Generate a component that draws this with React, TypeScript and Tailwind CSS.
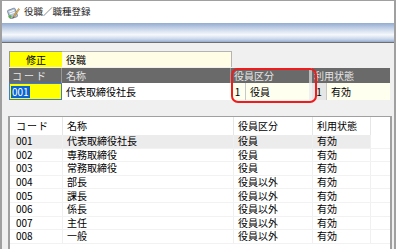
import React from "react";

const rows = [
  { code: "001", name: "代表取締役社長", kubun: "役員", status: "有効" },
  { code: "002", name: "専務取締役", kubun: "役員", status: "有効" },
  { code: "003", name: "常務取締役", kubun: "役員", status: "有効" },
  { code: "004", name: "部長", kubun: "役員以外", status: "有効" },
  { code: "005", name: "課長", kubun: "役員以外", status: "有効" },
  { code: "006", name: "係長", kubun: "役員以外", status: "有効" },
  { code: "007", name: "主任", kubun: "役員以外", status: "有効" },
  { code: "008", name: "一般", kubun: "役員以外", status: "有効" },
];

// タイトルバーの小さいアイコン
function TitleIcon() {
  return (
    <svg width="13" height="13" viewBox="0 0 13 13">
      <rect x="1.5" y="3" width="8" height="9" rx="1" fill="#b8c6d8" stroke="#6d7f99" strokeWidth="0.8" transform="rotate(-20 5.5 7.5)" />
      <rect x="3" y="4.5" width="5" height="1" fill="#ffffff" transform="rotate(-20 5.5 7.5)" />
      <rect x="3" y="6.5" width="5" height="1" fill="#ffffff" transform="rotate(-20 5.5 7.5)" />
      <path d="M6 10.5 L11.5 2.5 L12.5 3.3 L7 11.3 Z" fill="#f0b84a" stroke="#8a6a2a" strokeWidth="0.5" />
      <path d="M6 10.5 L7 11.3 L5.6 12 Z" fill="#333" />
      <circle cx="3" cy="10.5" r="1.6" fill="#5ab04a" />
    </svg>
  );
}

export default function App() {
  return (
    <div
      className="relative w-[396px] h-[249px] overflow-hidden border-x-2 border-t border-[#a0a0a0] bg-[#f0f0f0] text-[10px] leading-none text-black"
      style={{ fontFamily: '"Noto Sans CJK JP", "Noto Sans", sans-serif' }}
    >
      {/* タイトル */}
      <div className="h-[22px] bg-white flex items-center gap-[4px] pl-[5px]">
        <TitleIcon />
        <span className="text-[9.5px] text-[#222]">役職／職種登録</span>
      </div>
      <div className="h-[20px] bg-[linear-gradient(#93acd1,#c6d4e9_30%,#f6f9fc_62%,#c9d6ea_85%,#94aacd)] border-b border-[#6f6f6f]" />

      {/* 入力フォーム */}
      <div className="pl-[7px] pt-[8px]">
        <div className="flex h-[16px]">
          <div className="w-[53px] bg-[#ffff00] border-t border-l border-[#9a9a9a] flex items-center justify-center">修正</div>
          <div className="w-[170px] bg-[#fffde6] border-t border-r border-[#b4b4b4] flex items-center pl-[4px]">役職</div>
        </div>
        <div className="flex h-[15px] mt-[1px] text-[#e6e6e6]">
          <div className="w-[53px] bg-[#6a6a6a] border-r border-[#9a9a9a] flex items-center pl-[3px] tracking-[2px]">コード</div>
          <div className="w-[168px] bg-[#6a6a6a] flex items-center pl-[4px]">名称</div>
          <div className="w-[79px] bg-[#6a6a6a] border-l border-[#9a9a9a] flex items-center pl-[3px]">役員区分</div>
          <div className="w-[3px] bg-[#bdbdbd]" />
          <div className="w-[78px] bg-[#6a6a6a] flex items-center pl-[2px]">利用状態</div>
        </div>
        <div className="flex h-[17px]">
          <div className="w-[53px] bg-[#ffff00] border border-[#3d7bd6] flex items-center pl-[1px]">
            <span className="bg-[#0a64d2] text-white px-[1px] py-[1px]">001</span>
          </div>
          <div className="w-[168px] bg-white flex items-center pl-[4px]">代表取締役社長</div>
          <div className="w-[16px] bg-[#fffff0] border-r border-[#c8c8c8] flex items-center justify-center">1</div>
          <div className="w-[63px] bg-[#fffff0] flex items-center pl-[4px]">役員</div>
          <div className="w-[3px]" />
          <div className="w-[15px] bg-[#e6e6e6] border-r border-[#c8c8c8] flex items-center justify-center">1</div>
          <div className="w-[63px] bg-[#fffff0] flex items-center pl-[4px]">有効</div>
        </div>
      </div>

      {/* 赤枠 */}
      <div className="absolute left-[229px] top-[67px] w-[86px] h-[35px] border-[2.5px] border-[#ee1c1c] rounded-[7px]" />

      {/* 一覧 */}
      <div className="ml-[6px] mt-[16px] w-[384px] h-[140px] bg-white border-t border-x-2 border-[#a0a0a0]">
        <div className="flex h-[18px] items-center">
          <div className="w-[53px] h-full flex items-center pl-[6px] border-r border-[#e6e6e6] tracking-[1px]">コード</div>
          <div className="w-[171px] h-full flex items-center pl-[4px] border-r border-[#e6e6e6]">名称</div>
          <div className="w-[79px] h-full flex items-center pl-[4px] border-r border-[#e6e6e6]">役員区分</div>
          <div className="w-[58px] h-full flex items-center pl-[4px] border-r border-[#e6e6e6]">利用状態</div>
        </div>
        {rows.map((r, i) => (
          <div key={r.code} className="flex h-[13.6px] border-b border-[#f2f2f2]">
            <div className={`flex w-[361px] ${i === 0 ? "bg-[#ececec]" : ""}`}>
              <div className="w-[53px] flex items-center pl-[6px] border-r border-[#f0f0f0]">{r.code}</div>
              <div className="w-[171px] flex items-center pl-[4px] border-r border-[#f0f0f0]">{r.name}</div>
              <div className="w-[79px] flex items-center pl-[4px] border-r border-[#f0f0f0]">{r.kubun}</div>
              <div className="w-[58px] flex items-center pl-[4px] border-r border-[#f0f0f0]">{r.status}</div>
            </div>
          </div>
        ))}
      </div>
    </div>
  );
}
